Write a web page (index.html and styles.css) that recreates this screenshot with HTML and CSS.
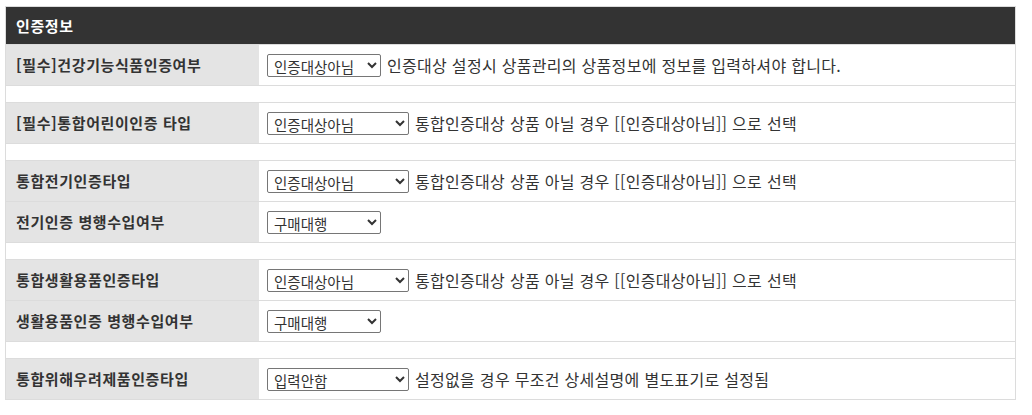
FILE: index.html
```html
<!DOCTYPE html>
<html lang="ko">
<head>
<meta charset="utf-8">
<title>인증정보</title>
<link rel="stylesheet" href="styles.css">
</head>
<body>
<div class="wrap">
<table class="cert">
  <thead>
    <tr><th colspan="2" class="head">인증정보</th></tr>
  </thead>
  <tbody>
    <tr>
      <th>[필수]건강기능식품인증여부</th>
      <td><select class="w-auto"><option>인증대상아님</option></select><span class="desc">인증대상 설정시 상품관리의 상품정보에 정보를 입력하셔야 합니다.</span></td>
    </tr>
    <tr class="gap"><td colspan="2"></td></tr>
    <tr>
      <th>[필수]통합어린이인증 타입</th>
      <td><select class="w-type"><option>인증대상아님</option></select><span class="desc">통합인증대상 상품 아닐 경우 [[인증대상아님]] 으로 선택</span></td>
    </tr>
    <tr class="gap"><td colspan="2"></td></tr>
    <tr>
      <th>통합전기인증타입</th>
      <td><select class="w-type"><option>인증대상아님</option></select><span class="desc">통합인증대상 상품 아닐 경우 [[인증대상아님]] 으로 선택</span></td>
    </tr>
    <tr>
      <th>전기인증 병행수입여부</th>
      <td><select class="w-buy"><option>구매대행</option></select></td>
    </tr>
    <tr class="gap"><td colspan="2"></td></tr>
    <tr>
      <th>통합생활용품인증타입</th>
      <td><select class="w-type"><option>인증대상아님</option></select><span class="desc">통합인증대상 상품 아닐 경우 [[인증대상아님]] 으로 선택</span></td>
    </tr>
    <tr>
      <th>생활용품인증 병행수입여부</th>
      <td><select class="w-buy"><option>구매대행</option></select></td>
    </tr>
    <tr class="gap"><td colspan="2"></td></tr>
    <tr>
      <th>통합위해우려제품인증타입</th>
      <td><select class="w-type"><option>입력안함</option></select><span class="desc">설정없을 경우 무조건 상세설명에 별도표기로 설정됨</span></td>
    </tr>
  </tbody>
</table>
</div>
</body>
</html>
```

FILE: styles.css
```css
html, body {
  margin: 0;
  padding: 0;
  background: #fff;
}
body {
  font-family: "Noto Sans CJK KR", "Noto Sans", sans-serif;
  font-size: 15px;
  color: #333;
}
.wrap {
  padding: 6px 0 0 5px;
}
.cert {
  width: 1011px;
  border-collapse: collapse;
  border: 1px solid #dcdcdc;
}
.cert th,
.cert td {
  border: 1px solid #dcdcdc;
  border-left: none;
  border-right: none;
  height: 40px;
  padding: 0;
  line-height: 20px;
  vertical-align: middle;
  text-align: left;
}
.cert tbody th {
  width: 233px;
  padding: 0 10px;
  background: #e4e4e4;
  font-size: 15px;
  font-weight: bold;
  letter-spacing: 0.6px;
  color: #333;
}
.cert tbody td {
  padding: 0 8px;
  background: #fff;
  white-space: nowrap;
  font-size: 0;
}
.cert .head {
  background: #333;
  color: #fff;
  height: 37px;
  padding: 0 10px;
  font-size: 15px;
  font-weight: bold;
  letter-spacing: 0.6px;
  border: none;
}
.cert .gap td {
  height: 16px;
  padding: 0;
}
.desc {
  font-size: 16px;
  letter-spacing: 0.3px;
  color: #333;
  vertical-align: middle;
  margin-left: 6px;
}
select {
  font-family: "Noto Sans CJK KR", "Noto Sans", sans-serif;
  font-size: 14.5px;
  color: #333;
  height: 23px;
  padding: 0 2px;
  border: 1px solid #767676;
  border-radius: 2px;
  background: #fff;
  vertical-align: middle;
}
select.w-auto { width: 114px; }
select.w-type { width: 142px; }
select.w-buy { width: 114px; }
```
